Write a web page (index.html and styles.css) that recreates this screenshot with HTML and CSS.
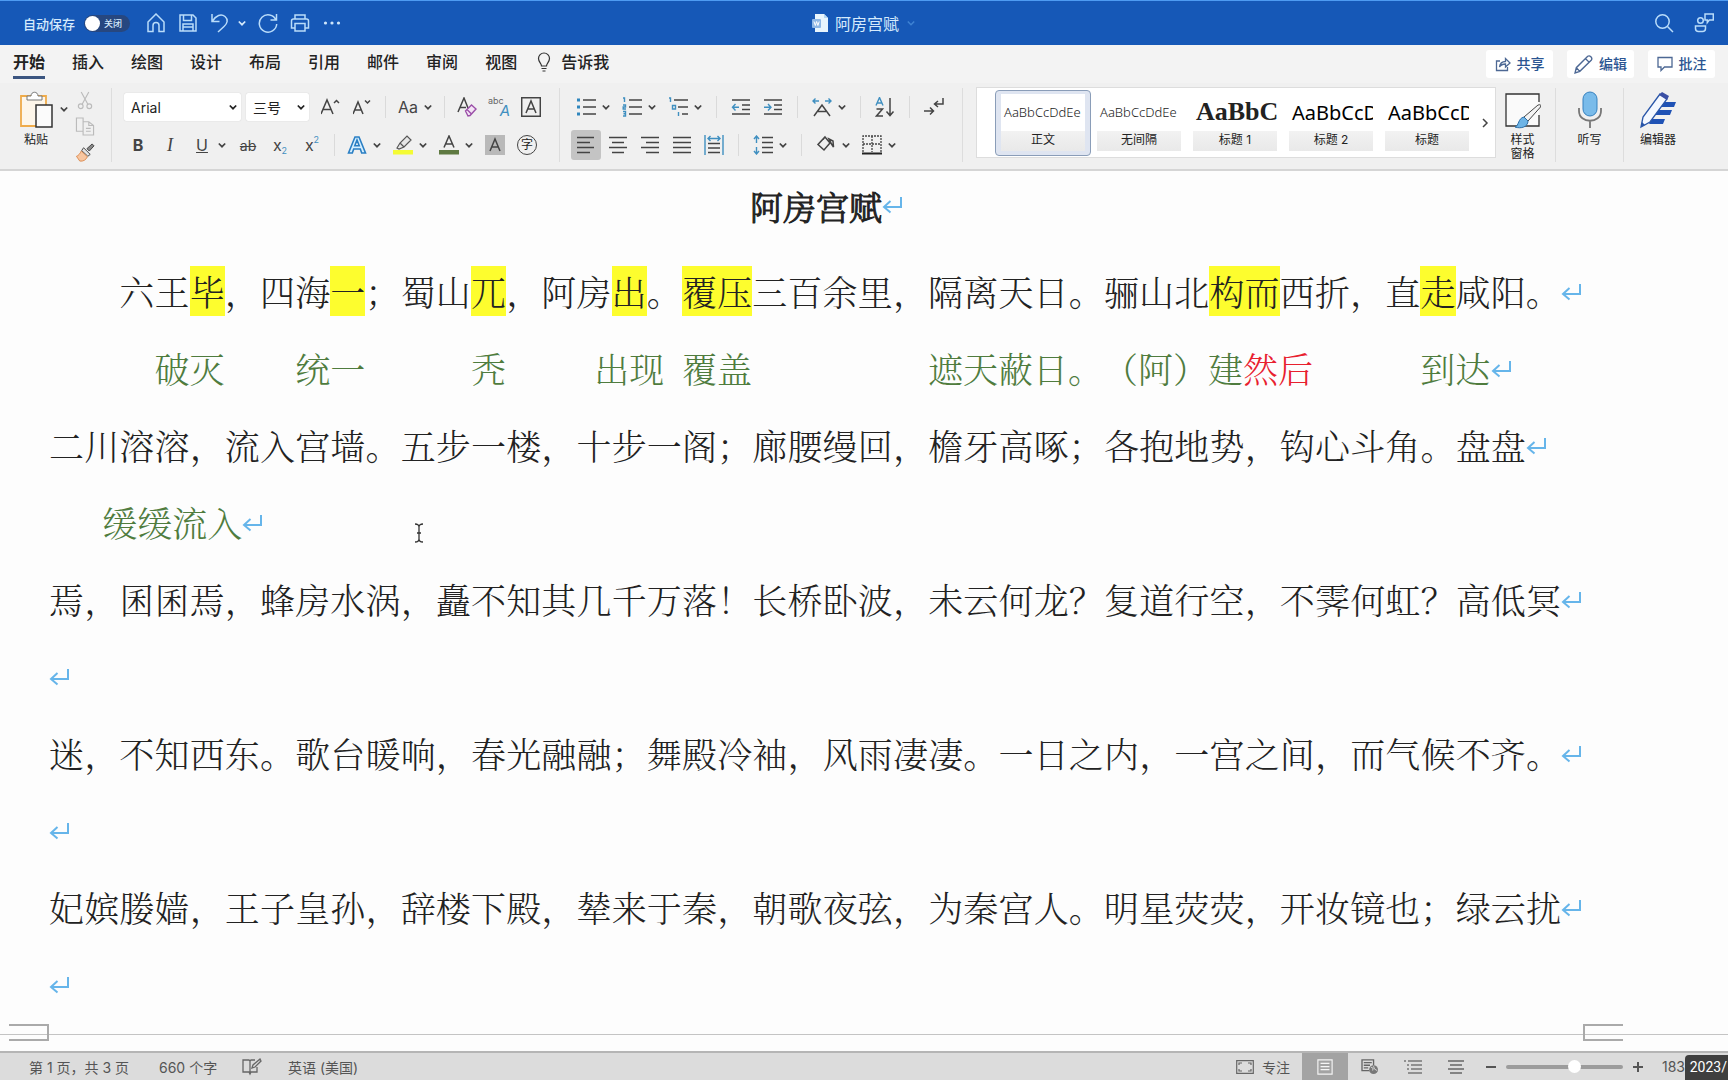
FILE: index.html
```html
<!DOCTYPE html>
<html lang="zh-CN">
<head>
<meta charset="utf-8">
<title>阿房宫赋</title>
<link rel="stylesheet" href="styles.css">
</head>
<body>
<svg class="defs" aria-hidden="true">
  <symbol id="chev" viewBox="0 0 12 12"><path d="M2.800 4.500 6 7.700l3.200-3.200" fill="none" stroke="currentColor" stroke-width="1.700"/></symbol>
  <symbol id="ret" viewBox="0 0 22 22"><path d="M19 3v10H2M8.500 7 2 13l6.500 5.500" fill="none" stroke="#66b5ea" stroke-width="2"/></symbol>
</svg>
<div class="app">
<header class="titlebar">
  <div class="quick">
    <label class="autosave">自动保存 <span class="switch"><input type="checkbox" role="switch"><span>关闭</span></span></label>
    <button aria-label="主页"><svg viewBox="0 0 20 20"><path d="M2 9 10 1l8 8v9.500h-5V12.500a3 3 0 0 0-6 0v6H2z"/></svg></button>
    <button aria-label="保存"><svg viewBox="0 0 20 20"><path d="M2 2h13l3 3v13H2zM5.500 2v5.500h8V2M5 18v-7h10v7M5 14h10"/></svg></button>
    <button aria-label="撤消"><svg viewBox="0 0 20 20"><path d="M2 1v7.500h7.500M2.500 8C6 2.500 11 .5 15 3.500c3.500 3 2.500 7-1 10L8 19"/></svg></button>
    <button class="dd" aria-label="撤消选项"><svg><use href="#chev"/></svg></button>
    <button aria-label="重复"><svg viewBox="0 0 20 20"><path d="M18.500 1v6h-6M18 7A8.700 8.700 0 1 0 18.700 11"/></svg></button>
    <button aria-label="打印"><svg viewBox="0 0 20 20"><path d="M5 6V2h10v4M5 15H1.500V8q0-2 2-2h13q2 0 2 2v7H15M5 10.500h10V18H5z"/></svg></button>
    <button aria-label="更多"><svg viewBox="0 0 20 20"><g fill="#cfe6fb" stroke="none"><circle cx="3.500" cy="10" r="1.600"/><circle cx="10" cy="10" r="1.600"/><circle cx="16.500" cy="10" r="1.600"/></g></svg></button>
  </div>
  <h1 class="doc-name"><svg viewBox="0 0 18 20"><path d="M4 1h9l4 4v14H4z" fill="#e8f5fd"/><path d="M13 1v4h4" fill="#b5d7f2"/><rect x="1" y="6" width="9" height="9" rx="1" fill="#8fb8e6"/><path d="m3 8.500 1.300 4 1.300-4 1.300 4 1.300-4" fill="none" stroke="#fff"/></svg>阿房宫赋<svg class="faint" viewBox="0 0 12 12"><path d="M2.800 4.500 6 7.700l3.200-3.200" fill="none" stroke="#3f83d3" stroke-width="1.500"/></svg></h1>
  <div class="title-right">
    <button aria-label="搜索"><svg viewBox="0 0 20 20"><circle cx="8.500" cy="8.500" r="6.700"/><path d="m13.500 13.500 5.500 5.500"/></svg></button>
    <button aria-label="协作"><svg viewBox="0 0 20 20"><circle cx="6.500" cy="7.500" r="2.800"/><path d="M1.500 13h10v2.500q0 3-3 3H4.500q-3 0-3-3zM11 1h8.300v6h-4l-2 2.500V7H11z"/></svg></button>
  </div>
</header>

<nav class="tabs">
  <a href="#" class="on">开始</a><a href="#">插入</a><a href="#">绘图</a><a href="#">设计</a><a href="#">布局</a><a href="#">引用</a><a href="#">邮件</a><a href="#">审阅</a><a href="#">视图</a>
  <a href="#" class="tell"><svg viewBox="0 0 14 20"><path d="M4.500 14c0-2.500-3-4-3-7.500a5.500 5.500 0 0 1 11 0c0 3.500-3 5-3 7.500zM4.500 16.500h5M5.500 19h3" fill="none" stroke="#333" stroke-width="1.200"/></svg>告诉我</a>
  <div class="actions">
    <button><svg viewBox="0 0 16 16"><path d="M5 5H1.500v9.500h11V11M4.500 11c.5-4 3-5.500 6-5.500V2.500L15 7l-4.500 4V8C8 8 6 8.500 4.500 11z"/></svg>共享</button>
    <button><svg class="pen" viewBox="0 0 18 18"><path d="m1 17 1.200-5L13 1.200q1.500-1 3 .5t.5 3L5.500 15.500z M2.200 12l3.300 3.500M11 3.500l3.500 3.500"/></svg>编辑</button>
    <button><svg viewBox="0 0 16 16"><path d="M1 1.500h14v9.500H7.500L4 14.500V11H1z"/></svg>批注</button>
  </div>
</nav>

<section class="ribbon" aria-label="开始">
  <div class="clip">
    <button class="big"><svg viewBox="0 0 34 38"><path d="M3 5h24v30H2V5z" fill="#fdf6ea" stroke="#efab4a" stroke-width="1.800"/><path d="M8 9V5h4c0-5 7-5 7 0h4v4z" fill="#fff" stroke="#777"/><path d="M17 14h16v22H17z" fill="#fbfbfb" stroke="#333" stroke-width="1.500"/></svg>粘贴</button>
    <button class="dd" aria-label="粘贴选项"><svg><use href="#chev"/></svg></button>
    <div class="clip-col">
      <button aria-label="剪切"><svg viewBox="0 0 20 20"><g fill="none" stroke="#bbb" stroke-width="1.200"><path d="m6 1 7 13M14 1 7 14"/><circle cx="5.500" cy="16" r="2.500"/><circle cx="14.500" cy="16" r="2.500"/></g></svg></button>
      <button aria-label="复制"><svg viewBox="0 0 20 20"><path d="M8 5V1H1v14h7M8 5h6l5 4v10H8zM14 5v4h5M11 12h5M11 15h5" fill="none" stroke="#bbb" stroke-width="1.200"/></svg></button>
      <button aria-label="格式刷"><svg viewBox="0 0 20 20"><path d="m12 6 5.500-5 2 2-5 5.500z" fill="#888" stroke="#444"/><path d="m8.500 5 7 7-2.500 2-6.500-6z" fill="#e4e4e4" stroke="#444"/><path d="m6 8.500 6.500 6C11 18 8 19.500 4.500 19L1 14c2-.5 4-3 5-5.500z" fill="#f8c6a0" stroke="#dc8d53"/></svg></button>
    </div>
  </div>
  <div class="group font-tools">
    <div class="row">
      <div class="combos">
        <span class="combo face"><select aria-label="字体"><option>Arial</option></select><svg><use href="#chev"/></svg></span>
        <span class="combo size"><select aria-label="字号"><option>三号</option></select><svg><use href="#chev"/></svg></span>
      </div>
      <button aria-label="增大字号"><svg viewBox="0 0 20 20"><path d="M0 17 6 3l6 14M2 12.500h8M13 6l2.500-2.500L18 6" class="k"/></svg></button>
      <button aria-label="减小字号"><svg viewBox="0 0 20 20"><path d="m0 17 5-12 5 12M2 13h6M12 3.500 14.500 6 17 3.500" class="k"/></svg></button>
      <i class="sep"></i>
      <button class="glyph">Aa</button><button class="dd" aria-label="更改大小写"><svg><use href="#chev"/></svg></button>
      <i class="sep"></i>
      <button aria-label="清除格式"><svg viewBox="0 0 20 20"><path d="M1 15 7 1l4 10M3 10.500h6" class="k"/><path d="m8.500 14 6-6L19 12l-6 6.500-2 .5zM10 12.500l4.500 4.500" fill="#f3e4f5" stroke="#9b4fa8" stroke-width="1.400"/></svg></button>
      <button aria-label="拼音指南" class="phon"><small>abc</small><b>A</b></button>
      <button aria-label="字符边框"><svg viewBox="0 0 20 20"><path d="M.7.700h18.600v18.600H.7zM5 16l5-12 5 12M6.800 12h6.400" class="k"/></svg></button>
    </div>
    <div class="row">
      <button class="glyph bold">B</button><button class="glyph ital">I</button><button class="glyph under">U</button><button class="dd" aria-label="下划线样式"><svg><use href="#chev"/></svg></button>
      <button class="glyph strike">ab</button><button class="glyph">x<sub>2</sub></button><button class="glyph">x<sup>2</sup></button>
      <i class="sep"></i>
      <button aria-label="文本效果"><svg viewBox="0 0 20 20"><path d="M1.500 18 8 2h4l6.500 16h-3.800l-1.400-4H6.700l-1.400 4zM7.800 10.800h4.400L10 5z" fill="#d6efff" stroke="#2a7fc4" stroke-width="1.600"/></svg></button><button class="dd" aria-label="文本效果选项"><svg><use href="#chev"/></svg></button>
      <button aria-label="突出显示"><svg viewBox="0 0 20 20"><path d="m4 13 3-5 7-7 4 4-7 7-5 2zM7 8l4 4" fill="#e6e6e6" stroke="#555" stroke-width="1.200"/><path d="M0 15h20v4.500H0z" fill="#f4fb34"/></svg></button><button class="dd" aria-label="突出显示颜色"><svg><use href="#chev"/></svg></button>
      <button aria-label="字体颜色"><svg viewBox="0 0 20 20"><path d="M5 12.500 10 1l5 11.500M6.500 9h7" class="k"/><path d="M0 15h20v4.500H0z" fill="#5f7a42"/></svg></button><button class="dd" aria-label="字体颜色选项"><svg><use href="#chev"/></svg></button>
      <button aria-label="字符底纹"><svg viewBox="0 0 20 20"><path d="M0 0h20v20H0z" fill="#b9b9b9"/><path d="m5 16 5-12 5 12M6.800 12h6.400" class="k"/></svg></button>
      <button class="enclosed">字</button>
    </div>
  </div>
  <div class="group para">
    <div class="row">
      <button aria-label="项目符号"><svg viewBox="0 0 20 20"><path d="M7 3h13M7 10h13M7 17h13" class="k"/><path d="M1 1.500h3v3H1zM1 8.500h3v3H1zM1 15.500h3v3H1z" fill="#2f86bd"/></svg></button><button class="dd" aria-label="项目符号选项"><svg><use href="#chev"/></svg></button>
      <button aria-label="编号"><svg viewBox="0 0 20 20"><path d="M7 3h13M7 10h13M7 17h13" class="k"/><path d="M1 1h1.500v4M1 8h2.500v2H1.200v2H4M1 14.500h2.500v4.500H1M1.500 16.800h2" class="b"/></svg></button><button class="dd" aria-label="编号选项"><svg><use href="#chev"/></svg></button>
      <button aria-label="多级列表"><svg viewBox="0 0 20 20"><path d="M6 3h14M10 10h10M14 17h6" class="k"/><path d="M1 1h1.500v4M4.500 8.500h3v3.500h-3zM10.500 15v4" class="b"/></svg></button><button class="dd" aria-label="多级列表选项"><svg><use href="#chev"/></svg></button>
      <i class="sep"></i>
      <button aria-label="减少缩进"><svg viewBox="0 0 20 20"><path d="M1 3h18M11 8h8M11 12.500h8M1 17h18" class="k"/><path d="M8 10.200H1.500M4.500 7l-3 3.200 3 3.200" class="b"/></svg></button>
      <button aria-label="增加缩进"><svg viewBox="0 0 20 20"><path d="M1 3h18M11 8h8M11 12.500h8M1 17h18" class="k"/><path d="M1 10.200h6.500M5 7l3 3.200-3 3.200" class="b"/></svg></button>
      <i class="sep"></i>
      <button aria-label="中文版式"><svg viewBox="0 0 20 20"><path d="m2 19 8-11 8 11M6 14.500h8" class="k"/><path d="M7 4H1M3.500 1.500 1 4l2.500 2.500M13 4h6M16.500 1.500 19 4l-2.500 2.500" class="b"/></svg></button><button class="dd" aria-label="中文版式选项"><svg><use href="#chev"/></svg></button>
      <i class="sep"></i>
      <button aria-label="排序"><svg viewBox="0 0 20 20"><path d="m1 8.500 3.500-8L8 8.500M2.300 6h4.400" class="b"/><path d="M1.500 12h6l-6 7h6.500M15 1v17M11.500 14.500 15 18.500l3.500-4" class="k"/></svg></button>
      <i class="sep"></i>
      <button aria-label="显示编辑标记"><svg viewBox="0 0 20 20"><path d="M0 14h9M6 10.500 9.500 14 6 17.500M19 1v6h-8M14 4l-3.500 3 3.500 3" class="k"/></svg></button>
    </div>
    <div class="row">
      <button aria-label="左对齐" class="sel"><svg viewBox="0 0 20 20"><path d="M1 2.500h17M1 7.500h13M1 12.500h17M1 17.500h13" class="k"/></svg></button>
      <button aria-label="居中"><svg viewBox="0 0 20 20"><path d="M1 2.500h18M4 7.500h12M1 12.500h18M4 17.500h12" class="k"/></svg></button>
      <button aria-label="右对齐"><svg viewBox="0 0 20 20"><path d="M1 2.500h18M6 7.500h13M1 12.500h18M6 17.500h13" class="k"/></svg></button>
      <button aria-label="两端对齐"><svg viewBox="0 0 20 20"><path d="M1 2.500h18M1 7.500h18M1 12.500h18M1 17.500h18" class="k"/></svg></button>
      <button aria-label="分散对齐"><svg viewBox="0 0 20 20"><path d="M4 8.500h12M4 13h12M4 17.500h12" class="k"/><path d="M1 0v20M19 0v20M4 3.500h12M6.500 1 4 3.500 6.500 6M13.500 1 16 3.500 13.500 6" class="b"/></svg></button>
      <i class="sep"></i>
      <button aria-label="行距"><svg viewBox="0 0 20 20"><path d="M9 2.500h11M9 7.500h11M9 12.500h11M9 17.500h11" class="k"/><path d="M3.500 8V1M1 4l2.500-3L6 4M3.500 12v7M1 16l2.500 3L6 16" class="b"/></svg></button><button class="dd" aria-label="行距选项"><svg><use href="#chev"/></svg></button>
      <i class="sep"></i>
      <button aria-label="底纹"><svg viewBox="0 0 20 20"><path d="m9 2 5 6-6 7-6-5.500zM9 2 7 4.500M13 4l4 2 .5 6-2-3z" class="k"/></svg></button><button class="dd" aria-label="底纹选项"><svg><use href="#chev"/></svg></button>
      <button aria-label="边框"><svg viewBox="0 0 20 20"><path d="M1 17V1h18v16M10 1v16M1 9h18" fill="none" stroke="#444" stroke-width="1.300" stroke-dasharray="2 1"/><path d="M0 18.500h20" stroke="#222" stroke-width="2"/></svg></button><button class="dd" aria-label="边框选项"><svg><use href="#chev"/></svg></button>
    </div>
  </div>
  <div class="gallery">
    <button class="style on"><span class="pv">AaBbCcDdEe</span><span class="nm">正文</span></button>
    <button class="style"><span class="pv">AaBbCcDdEe</span><span class="nm">无间隔</span></button>
    <button class="style"><span class="pv h1">AaBbC</span><span class="nm">标题 1</span></button>
    <button class="style"><span class="pv h2">AaBbCcD</span><span class="nm">标题 2</span></button>
    <button class="style"><span class="pv h2">AaBbCcD</span><span class="nm">标题</span></button>
    <button class="next" aria-label="更多样式"><svg viewBox="0 0 12 12"><path d="m4 2 4 4-4 4" class="k"/></svg></button>
  </div>
  <div class="bigs">
    <button class="big"><svg viewBox="0 0 36 38"><path d="M34 24v11H1V3h33v8" fill="#fafafa" stroke="#333" stroke-width="1.300"/><path d="m19 26 14-12q4-1 2.500 2L23 30z" fill="#f4f4f4" stroke="#444"/><path d="M10 36c4-1 3-9 9-10l4 4c0 6-7 8-13 6z" fill="#6db4e6" stroke="#2c6ea6"/></svg>样式<br>窗格</button>
    <button class="big"><svg viewBox="0 0 36 38"><rect x="11" y="1" width="14" height="24" rx="7" fill="#79bbea" stroke="#3681bf"/><path d="M7 17v3c0 13 22 13 22 0v-3M18 30v7" fill="none" stroke="#777" stroke-width="1.800"/></svg>听写</button>
    <button class="big"><svg viewBox="0 0 36 38"><path d="M18 11h18l-2 5H15zM15 19h17l-2 5H12zM12 28h13l-2 5H9z" fill="#1f52b5"/><path d="M1 36 3 26 20 3l7 5L10 31z" fill="#f4f8ff" stroke="#2855a8" stroke-width="1.300"/><path d="m19 4 3-3 7 4-2 4z" fill="#3b50a5"/><path d="m1 36 1-5 3 3z" fill="#2855a8"/></svg>编辑器</button>
  </div>
</section>

<main class="page">
  <h2 class="heading">阿房宫赋<svg class="ret"><use href="#ret"/></svg></h2>
  <div class="line"><p class="from3">六王<mark>毕</mark>，四海<mark>一</mark>；蜀山<mark>兀</mark>，阿房<mark>出</mark>。<mark>覆压</mark>三百余里，隔离天日。骊山北<mark>构而</mark>西折，直<mark>走</mark>咸阳。</p><svg class="ret"><use href="#ret"/></svg></div>
  <div class="line note"><span class="c4">破灭</span><span class="c8">统一</span><span class="c13">秃</span><span class="c16">出现</span><span class="c19">覆盖</span><span class="c26">遮天蔽日。（阿）建<em>然后</em></span><span class="c40">到达</span><svg class="ret"><use href="#ret"/></svg></div>
  <div class="line"><p class="short">二川溶溶，流入宫墙。五步一楼，十步一阁；廊腰缦回，檐牙高啄；各抱地势，钩心斗角。盘盘</p><svg class="ret"><use href="#ret"/></svg></div>
  <div class="line note"><span class="c2">缓缓流入<svg class="ret"><use href="#ret"/></svg></span></div>
  <div class="line"><p>焉，囷囷焉，蜂房水涡，矗不知其几千万落！长桥卧波，未云何龙？复道行空，不霁何虹？高低冥</p><svg class="ret"><use href="#ret"/></svg></div>
  <div class="line"><svg class="ret"><use href="#ret"/></svg></div>
  <div class="line"><p>迷，不知西东。歌台暖响，春光融融；舞殿冷袖，风雨凄凄。一日之内，一宫之间，而气候不齐。</p><svg class="ret"><use href="#ret"/></svg></div>
  <div class="line"><svg class="ret"><use href="#ret"/></svg></div>
  <div class="line"><p>妃嫔媵嫱，王子皇孙，辞楼下殿，辇来于秦，朝歌夜弦，为秦宫人。明星荧荧，开妆镜也；绿云扰</p><svg class="ret"><use href="#ret"/></svg></div>
  <div class="line"><svg class="ret"><use href="#ret"/></svg></div>
  <svg class="ibeam" viewBox="0 0 10 20"><path d="M1 1q4 0 4 3v12q0 3-4 3M9 1Q5 1 5 4v12q0 3 4 3M3 10h4" fill="none" stroke="#333" stroke-width="1.300"/></svg>
</main>
<div class="break"><i class="crop left"></i><i class="crop right"></i></div>

<footer class="status">
  <span class="pages">第 1 页，共 3 页</span><span class="words">660 个字</span>
  <svg class="proof" viewBox="0 0 20 18"><path d="M8 3v12M15 9v5H9l-1 2-1-2H1V2h6l1 1 1-1h4M10 10l1-3 7-6 1 2-6 6z" fill="none" stroke="#666" stroke-width="1.300"/></svg>
  <span>英语 (美国)</span>
  <button class="focus"><svg viewBox="0 0 18 14"><path d="M.7.700h16.600v12.600H.7zM3 5V3h3M12 3h3v2M15 9v2h-3M6 11H3V9" fill="none" stroke="#666" stroke-width="1.200"/></svg>专注</button>
  <div class="views">
    <button class="on" aria-label="页面视图"><svg viewBox="0 0 18 18"><path d="M1 1h16v16H1zM4 5h10M4 8.500h10M4 12h10" fill="none" stroke="#f5f5f5" stroke-width="1.300"/></svg></button>
    <button aria-label="Web 版式"><svg viewBox="0 0 20 18"><path d="M9 13H1V1h13v6M3 4h9M3 7h7M3 10h5" fill="none" stroke="#666" stroke-width="1.500"/><circle cx="14" cy="12" r="5" fill="#777"/><path d="M11 9q4 1 2 4M14 8q0 4 4 5" stroke="#ddd" fill="none"/></svg></button>
    <button aria-label="大纲"><svg viewBox="0 0 18 16"><path d="M4 2h14M7 6h11M7 10h11M4 14h14M0 2h2M3 6h2M3 10h2" fill="none" stroke="#777" stroke-width="1.300"/></svg></button>
    <button aria-label="草稿"><svg viewBox="0 0 18 16"><path d="M1 2h16M3 6h12M1 10h16M3 14h12" fill="none" stroke="#666" stroke-width="1.400"/></svg></button>
  </div>
  <div class="zoom">
    <button aria-label="缩小"><svg viewBox="0 0 12 12"><path d="M1 6h10" stroke="#555" stroke-width="2"/></svg></button>
    <input type="range" min="0" max="100" value="60" aria-label="缩放">
    <button aria-label="放大"><svg viewBox="0 0 12 12"><path d="M1 6h10M6 1v10" stroke="#555" stroke-width="2"/></svg></button>
    <span>183%</span>
  </div>
  <div class="stamp">2023/</div>
</footer>
</div>
</body>
</html>
```
FILE: styles.css
```css
* { box-sizing: border-box; }
body { margin: 0; font-family: Inter, "Noto Sans CJK SC", sans-serif; font-size: 13px; color: #222; }
button { font: inherit; color: inherit; background: none; border: 0; padding: 0; display: flex; align-items: center; justify-content: center; flex: none; }
svg { display: block; flex: none; }
a { color: inherit; text-decoration: none; }
.defs { position: absolute; width: 0; height: 0; }
.app { display: flex; flex-direction: column; min-height: 100vh; overflow: hidden; position: relative; background: #fdfdfd; }
.k { fill: none; stroke: #444; stroke-width: 1.5; }
.b { fill: none; stroke: #3f8fc0; stroke-width: 1.4; }

.titlebar { display: grid; grid-template-columns: 1fr auto 1fr; align-items: center; height: 45px; background: #1658b7; border-top: 1px solid #4e9bf2; color: #d5eafc; }
.titlebar button svg { width: 20px; height: 20px; fill: none; stroke: #b9dcfa; stroke-width: 1.5; }
.titlebar .dd svg { width: 12px; height: 12px; stroke: none; color: #d5eafc; }
.quick { display: flex; align-items: center; gap: 12px; padding-left: 23px; }
.quick .dd { margin: 0 -2px 0 -6px; }
.autosave { display: flex; align-items: center; gap: 9px; margin-right: 4px; font-weight: 500; }
.switch { display: flex; align-items: center; gap: 4px; width: 46px; height: 17px; border-radius: 9px; background: #27477f; font-size: 9px; padding: 0 1px; }
.switch input { appearance: none; margin: 0; width: 15px; height: 15px; border-radius: 50%; background: #fff; }
.doc-name { display: flex; align-items: center; gap: 6px; margin: 0; font-size: 16px; font-weight: 400; }
.doc-name svg { width: 18px; height: 20px; }
.doc-name .faint { width: 12px; height: 12px; }
.title-right { display: flex; justify-content: flex-end; gap: 20px; padding-right: 14px; }

.tabs { display: flex; align-items: center; gap: 27px; height: 38px; padding: 0 13px; background: #f3f3f3; font-size: 16px; font-weight: 500; line-height: 24px; }
.tabs a { display: flex; align-items: center; padding-bottom: 2px; border-bottom: 3px solid transparent; }
.tabs a.on { border-color: #3b5580; font-weight: 700; }
.tabs .tell { gap: 10px; margin-left: -7px; }
.tell svg { width: 14px; height: 20px; }
.actions { display: flex; gap: 14px; margin-left: auto; }
.actions button { gap: 6px; width: 67px; height: 28px; background: #fff; border-radius: 3px; font-size: 14px; color: #2c5592; }
.actions svg { width: 16px; height: 16px; fill: none; stroke: #4d6894; stroke-width: 1.3; }
.actions .pen { width: 19px; height: 19px; }

.ribbon { display: flex; align-items: flex-start; height: 88px; padding: 5px 36px 0 14px; background: #f0f0f0; border-bottom: 2px solid #d5d5d5; }
.big { flex-direction: column; justify-content: flex-start; font-size: 12px; line-height: 14px; gap: 4px; padding-top: 3px; }
.big svg { width: 36px; height: 38px; }
.clip { display: flex; width: 98px; height: 74px; border-right: 1px solid #ddd; }
.clip .big { width: 44px; }
.clip .dd { height: 42px; }
.clip-col { display: flex; flex-direction: column; justify-content: space-between; margin-left: 5px; padding: 3px 0 0; }
.clip-col svg { width: 20px; height: 19px; }
.dd svg { width: 12px; height: 12px; color: #444; }
.group { display: flex; flex-direction: column; gap: 8px; height: 74px; padding-top: 4px; border-right: 1px solid #ddd; }
.row { display: flex; align-items: center; gap: 12px; height: 30px; }
.row button { width: 20px; }
.row button svg { width: 20px; height: 20px; }
.row .dd { width: 12px; margin: 0 -2px 0 -8px; }
.row .dd svg { width: 12px; height: 12px; }
.sep { width: 1px; height: 22px; margin: 0 2px; background: #dadada; }
.font-tools { width: 448px; padding-left: 12px; }
.font-tools .sep { margin: 0; }
.font-tools .row + .row { padding-left: 4px; }
.combos { display: flex; gap: 5px; }
.combo { display: flex; align-items: center; height: 28px; background: #fff; border-radius: 2px; box-shadow: 0 0 1px #bbb; }
.combo select { appearance: none; flex: 1; min-width: 0; border: 0; background: none; padding: 0 0 0 7px; font: inherit; font-size: 14px; color: inherit; }
.combo svg { width: 12px; height: 12px; margin-right: 2px; }
.face { width: 117px; }
.size { width: 63px; }
.glyph { font-size: 16px; color: #444; }
.bold { font-weight: 700; }
.ital { font-family: "Liberation Serif", serif; font-style: italic; font-size: 18px; }
.under { text-decoration: underline; }
.strike { text-decoration: line-through; font-size: 14px; }
.glyph sub, .glyph sup { font-size: 9px; line-height: 9px; color: #3f8fc0; }
.glyph sub { align-self: flex-end; }
.glyph sup { align-self: flex-start; }
.phon small { font-size: 9px; line-height: 9px; align-self: flex-start; color: #666; }
.phon b { font-size: 15px; line-height: 15px; font-style: italic; font-weight: 400; color: #3f8fc0; margin-left: -4px; padding-top: 7px; }
.row .enclosed { width: 20px; height: 20px; border: 1px solid #444; border-radius: 50%; font-size: 12px; line-height: 12px; }
.para { width: 403px; padding-left: 16px; }
.row .sel { width: 30px; height: 30px; margin: 0 -5px; background: #c4c4c4; border-radius: 3px; }

.gallery { display: flex; align-items: center; flex: 1; height: 71px; margin-left: 13px; margin-top: -1px; padding-left: 18px; background: #fff; border: 1px solid #ddd; overflow: hidden; }
.style { flex-direction: column; justify-content: flex-end; width: 96px; height: 66px; padding: 0 7px 4px; border: 1px solid transparent; border-radius: 4px; }
.style.on { border-color: #8a9db8; background: #dfe5f1; }
.pv { display: flex; align-items: center; width: 84px; height: 37px; padding-left: 3px; background: #fff; font-size: 13px; overflow: hidden; white-space: nowrap; font-family: "Noto Sans", sans-serif; font-weight: 300; color: #222; }
.pv.h1 { font-family: "Liberation Serif", serif; font-weight: 700; font-size: 26px; }
.pv.h2 { font-size: 20px; font-weight: 400; color: #000; }
.nm { width: 84px; height: 20px; font-size: 12px; line-height: 18px; background: linear-gradient(#f2f2f2, #e9e9e9); }
.next { flex: 1; }
.next svg { width: 12px; height: 12px; }
.bigs { display: flex; height: 74px; }
.bigs .big { width: 68px; border-right: 1px solid #ddd; }
.bigs .big:first-child { width: 60px; padding-right: 6px; }
.bigs .big:last-child { border: 0; }

.page { flex: 1; position: relative; padding: 0 145px 0 49px; font-family: "Noto Serif CJK SC", "Noto Sans CJK SC", sans-serif; font-size: 35px; font-weight: 300; color: #222; text-spacing-trim: space-all; }
.heading { display: flex; justify-content: center; align-items: center; height: 68px; margin: 0 0 14px; font-size: 33px; font-weight: 300; -webkit-text-stroke: 1px #222; }
.heading .ret { margin-right: -22px; }
.ret { width: 22px; height: 22px; }
.line { display: grid; grid-template-columns: repeat(43, minmax(0, 1fr)) 22px; align-items: center; height: 77px; line-height: 47px; white-space: nowrap; }
.line p { margin: 0; grid-column: 1 / 44; text-align: justify; text-align-last: justify; white-space: normal; }
.line p.from3 { grid-column-start: 3; }
.line p.short { grid-column-end: 43; }
.line mark { background: #fdfd2e; color: inherit; }
.note { color: #4f7c3e; }
.note em { font-style: normal; color: #e8202e; }
.c2 { grid-column: 2 / 7; display: flex; align-items: center; padding-left: 18px; }
.c4 { grid-column: 4 / 6; }
.c8 { grid-column: 8 / 10; }
.c13 { grid-column: 13 / 14; }
.c16 { grid-column: 16 / 19; justify-self: center; }
.c19 { grid-column: 19 / 21; }
.c26 { grid-column: 26 / 37; }
.c40 { grid-column: 40 / 42; }
.ibeam { position: absolute; left: 414px; top: 352px; width: 10px; height: 20px; }

.break { display: flex; justify-content: space-between; height: 27px; padding: 0 105px 0 9px; background: linear-gradient(#c4c4c4, #c4c4c4) 0 10px / 100% 1px no-repeat; }
.crop { width: 40px; height: 17px; border: 2px solid #aaa; }
.crop.left { border-left: 0; }
.crop.right { border-right: 0; }

.status { display: flex; align-items: center; height: 29px; padding-left: 29px; background: #dcdcdc; border-top: 2px solid #b5b5b5; font-size: 14px; color: #555; white-space: nowrap; }
.pages { width: 130px; }
.words { width: 83px; }
.proof { width: 20px; height: 18px; margin-right: 26px; }
.focus { gap: 8px; margin-left: auto; margin-right: 12px; }
.focus svg { width: 18px; height: 14px; }
.views { display: flex; align-self: stretch; }
.views button { width: 43px; }
.views .on { width: 46px; background: #a3a3a3; }
.views svg { width: 18px; height: 16px; }
.zoom { display: flex; align-items: center; gap: 9px; width: 251px; padding-left: 8px; }
.zoom svg { width: 12px; height: 12px; }
.zoom input { appearance: none; width: 117px; height: 4px; margin: 0; border-radius: 2px; background: #9c9c9c; }
.zoom input::-webkit-slider-thumb { appearance: none; width: 13px; height: 13px; border-radius: 50%; background: #fff; }
.zoom span { margin-left: 9px; }
.stamp { position: absolute; right: 0; bottom: 0; height: 25px; padding: 0 1px 0 5px; border-radius: 4px 0 0 0; background: #3f3f3f; color: #fff; line-height: 24px; font-family: Roboto, sans-serif; font-size: 14px; }
```
